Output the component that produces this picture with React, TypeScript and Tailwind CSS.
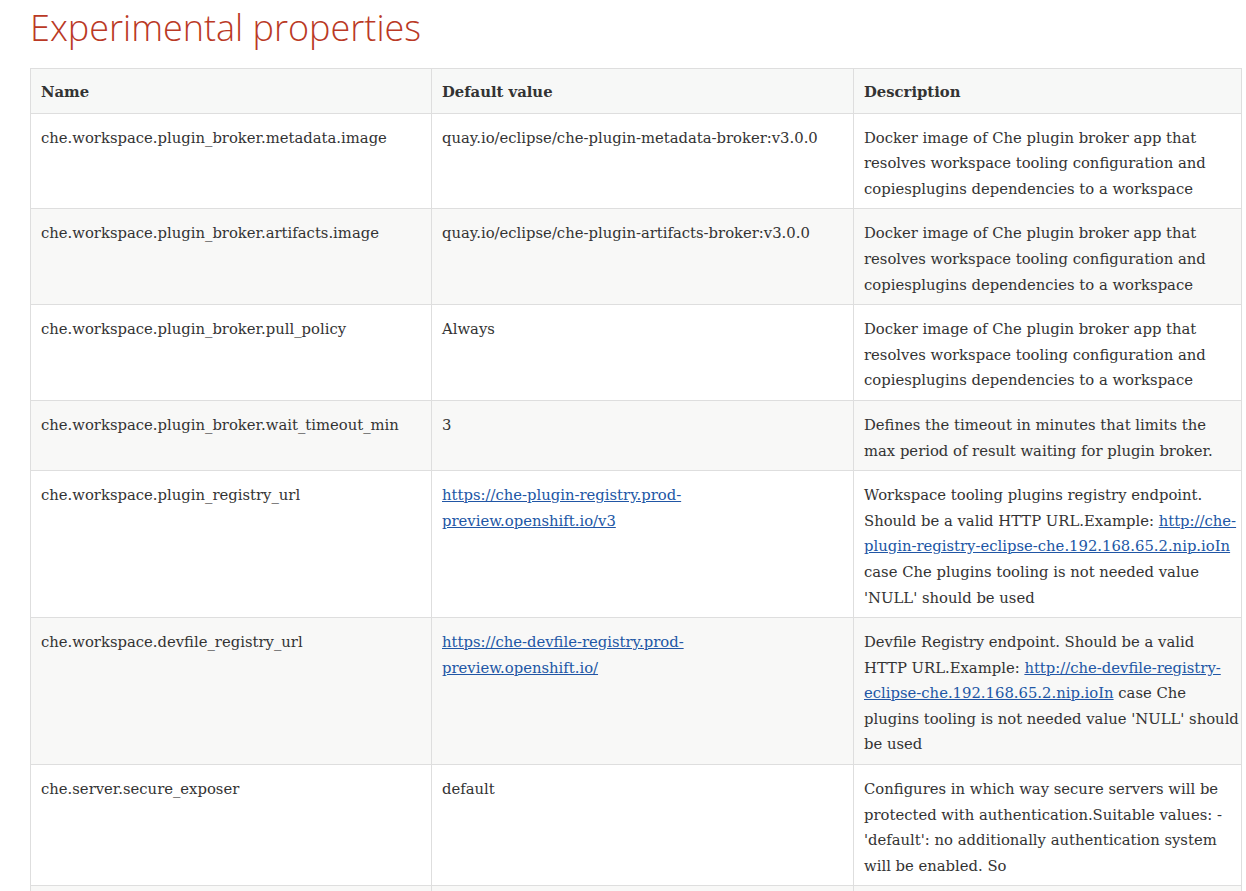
import React from "react";

// 한 셀 안의 줄은 참고 화면과 같게 직접 나눔 (폰트 폭이 달라서)
type Part = string | { href: string; text: string };
type Row = {
    name: string;
    value: Part[][];
    description: Part[][];
};

const rows: Row[] = [
    {
        name: "che.workspace.plugin_broker.metadata.image",
        value: [["quay.io/eclipse/che-plugin-metadata-broker:v3.0.0"]],
        description: [
            ["Docker image of Che plugin broker app that"],
            ["resolves workspace tooling configuration and"],
            ["copiesplugins dependencies to a workspace"],
        ],
    },
    {
        name: "che.workspace.plugin_broker.artifacts.image",
        value: [["quay.io/eclipse/che-plugin-artifacts-broker:v3.0.0"]],
        description: [
            ["Docker image of Che plugin broker app that"],
            ["resolves workspace tooling configuration and"],
            ["copiesplugins dependencies to a workspace"],
        ],
    },
    {
        name: "che.workspace.plugin_broker.pull_policy",
        value: [["Always"]],
        description: [
            ["Docker image of Che plugin broker app that"],
            ["resolves workspace tooling configuration and"],
            ["copiesplugins dependencies to a workspace"],
        ],
    },
    {
        name: "che.workspace.plugin_broker.wait_timeout_min",
        value: [["3"]],
        description: [
            ["Defines the timeout in minutes that limits the"],
            ["max period of result waiting for plugin broker."],
        ],
    },
    {
        name: "che.workspace.plugin_registry_url",
        value: [
            [{ href: "#", text: "https://che-plugin-registry.prod-" }],
            [{ href: "#", text: "preview.openshift.io/v3" }],
        ],
        description: [
            ["Workspace tooling plugins registry endpoint."],
            ["Should be a valid HTTP URL.Example: ", { href: "#", text: "http://che-" }],
            [{ href: "#", text: "plugin-registry-eclipse-che.192.168.65.2.nip.ioIn" }],
            ["case Che plugins tooling is not needed value"],
            ["'NULL' should be used"],
        ],
    },
    {
        name: "che.workspace.devfile_registry_url",
        value: [
            [{ href: "#", text: "https://che-devfile-registry.prod-" }],
            [{ href: "#", text: "preview.openshift.io/" }],
        ],
        description: [
            ["Devfile Registry endpoint. Should be a valid"],
            ["HTTP URL.Example: ", { href: "#", text: "http://che-devfile-registry-" }],
            [{ href: "#", text: "eclipse-che.192.168.65.2.nip.ioIn" }, " case Che"],
            ["plugins tooling is not needed value 'NULL' should"],
            ["be used"],
        ],
    },
    {
        name: "che.server.secure_exposer",
        value: [["default"]],
        description: [
            ["Configures in which way secure servers will be"],
            ["protected with authentication.Suitable values: -"],
            ["'default': no additionally authentication system"],
            ["will be enabled. So"],
        ],
    },
    {
        name: "che.server.secure_exposer.jwtproxy.token.issuer",
        value: [["wsmaster"]],
        description: [["Jwtproxy issuer string"]],
    },
];

function Lines({ lines }: { lines: Part[][] }) {
    return (
        <>
            {lines.map((line, i) => (
                <div key={i} className="whitespace-nowrap">
                    {line.map((part, j) =>
                        typeof part === "string" ? (
                            <span key={j}>{part}</span>
                        ) : (
                            <a key={j} href={part.href} className="text-[#2156a5] underline">
                                {part.text}
                            </a>
                        )
                    )}
                </div>
            ))}
        </>
    );
}

export default function App() {
    return (
        <div className="min-h-screen bg-white pl-[30px] pr-[5px]">
            <h2 className="pt-[4px] mb-[16px] text-[36px] leading-[48px] font-light text-[#ba3925] font-['Open_Sans','DejaVu_Sans',sans-serif]">
                Experimental properties
            </h2>

            <table className="w-[1211px] table-fixed border-collapse border border-[#dedede] font-['DejaVu_Serif',serif] text-[14.8px] leading-[25.6px] text-[#333]">
                <colgroup>
                    <col className="w-[401px]" />
                    <col className="w-[422px]" />
                    <col className="w-[388px]" />
                </colgroup>
                <thead>
                    <tr className="bg-[#f7f8f7]">
                        <th className="border border-[#dedede] pt-[10px] pb-[8px] px-[10px] text-left font-bold">Name</th>
                        <th className="border border-[#dedede] pt-[10px] pb-[8px] px-[10px] text-left font-bold">Default value</th>
                        <th className="border border-[#dedede] pt-[10px] pb-[8px] px-[10px] text-left font-bold">Description</th>
                    </tr>
                </thead>
                <tbody>
                    {rows.map((row, idx) => (
                        <tr key={row.name} className={idx % 2 === 1 ? "bg-[#f8f8f7]" : "bg-white"}>
                            <td className="border border-[#dedede] pt-[11px] pb-[7px] px-[10px] align-top whitespace-nowrap">{row.name}</td>
                            <td className="border border-[#dedede] pt-[11px] pb-[7px] px-[10px] align-top">
                                <Lines lines={row.value} />
                            </td>
                            <td className="border border-[#dedede] pt-[11px] pb-[7px] px-[10px] align-top">
                                <Lines lines={row.description} />
                            </td>
                        </tr>
                    ))}
                </tbody>
            </table>
        </div>
    );
}
